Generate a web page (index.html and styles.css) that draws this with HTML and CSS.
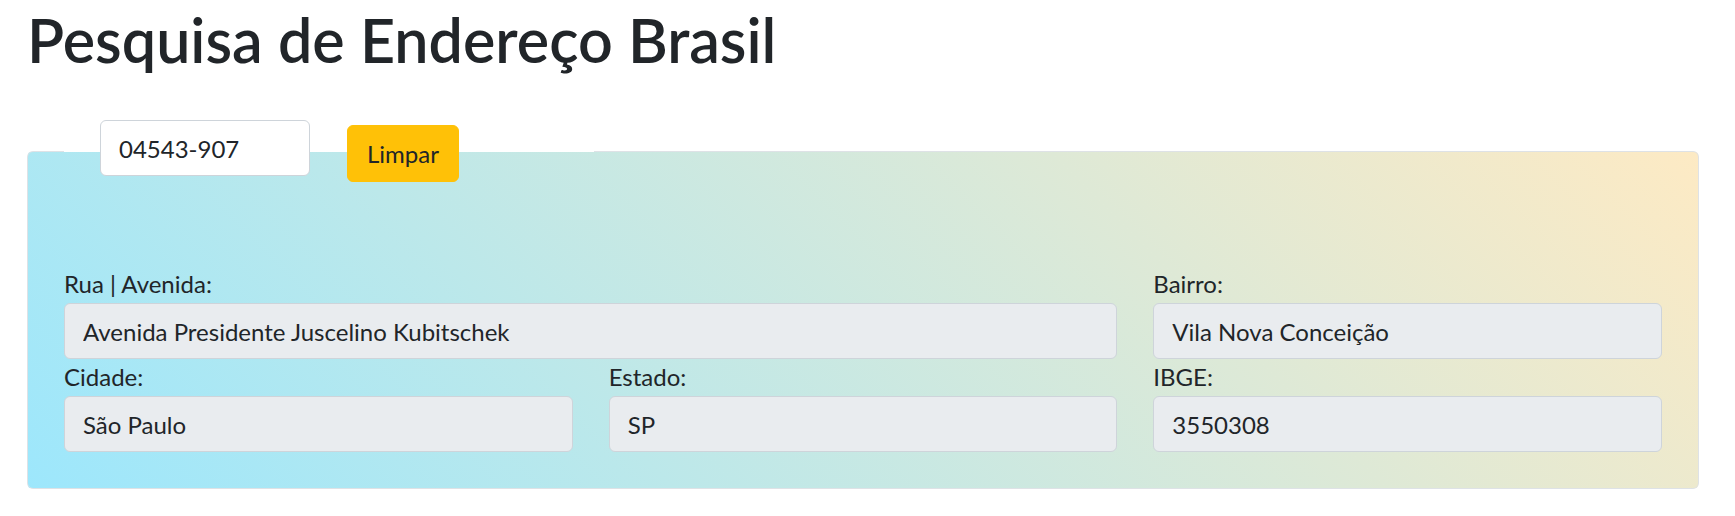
FILE: index.html
```html
<!DOCTYPE html>
<html lang="pt-BR">
<head>
<meta charset="utf-8">
<title>Pesquisa de Endereço Brasil</title>
<link rel="stylesheet" href="styles.css">
</head>
<body>
<main class="page">
  <h1 class="title">Pesquisa de Endereço Brasil</h1>
  <fieldset class="card">
    <legend class="search">
      <input class="cep" type="text" value="04543-907">
      <button class="btn-clear" type="button">Limpar</button>
    </legend>
    <div class="grid">
      <div class="field span-2">
        <label class="label">Rua | Avenida:</label>
        <input class="control" type="text" value="Avenida Presidente Juscelino Kubitschek" readonly>
      </div>
      <div class="field">
        <label class="label">Bairro:</label>
        <input class="control" type="text" value="Vila Nova Conceição" readonly>
      </div>
      <div class="field">
        <label class="label">Cidade:</label>
        <input class="control" type="text" value="São Paulo" readonly>
      </div>
      <div class="field">
        <label class="label">Estado:</label>
        <input class="control" type="text" value="SP" readonly>
      </div>
      <div class="field">
        <label class="label">IBGE:</label>
        <input class="control" type="text" value="3550308" readonly>
      </div>
    </div>
  </fieldset>
</main>
</body>
</html>
```
FILE: styles.css
```css
* { box-sizing: border-box; }
html, body { margin: 0; background: #fff; }
body {
  font-family: Lato, "Open Sans", sans-serif;
  color: #212529;
  font-size: 24px;
  line-height: 1.5;
}
.page { padding: 0 36px 0 27px; }
.title {
  margin: 0;
  padding-top: 4px;
  font-size: 61px;
  font-weight: 600;
  line-height: 72px;
  color: #212529;
}
.card {
  margin: 44px 0 0;
  padding: 0 36px 36px;
  border: 1px solid #dee2e6;
  border-radius: 6px;
  background: linear-gradient(45deg, #9de7fc 0%, #fdeac4 100%);
  min-inline-size: 0;
}
.search {
  display: flex;
  align-items: flex-start;
  gap: 37px;
  width: 530px;
  padding: 0 0 0 36px;
}
.cep {
  width: 210px;
  height: 56px;
  padding: 0 18px;
  border: 1px solid #ced4da;
  border-radius: 6px;
  background: #fff;
  font: inherit;
  color: #212529;
}
.btn-clear {
  width: 112px;
  margin-top: 5px;
  height: 57px;
  padding: 0;
  border: 1px solid #ffc107;
  border-radius: 6px;
  background: #ffc107;
  font: inherit;
  color: #212529;
}
.grid {
  display: grid;
  grid-template-columns: repeat(3, 1fr);
  column-gap: 36px;
  margin-top: 84px;
}
.span-2 { grid-column: span 2; }
.field { display: flex; flex-direction: column; }
.label { display: block; height: 37px; line-height: 36px; }
.control {
  height: 56px;
  padding: 0 18px;
  border: 1px solid #ced4da;
  border-radius: 6px;
  background: #e9ecef;
  font: inherit;
  color: #212529;
  width: 100%;
}
```
